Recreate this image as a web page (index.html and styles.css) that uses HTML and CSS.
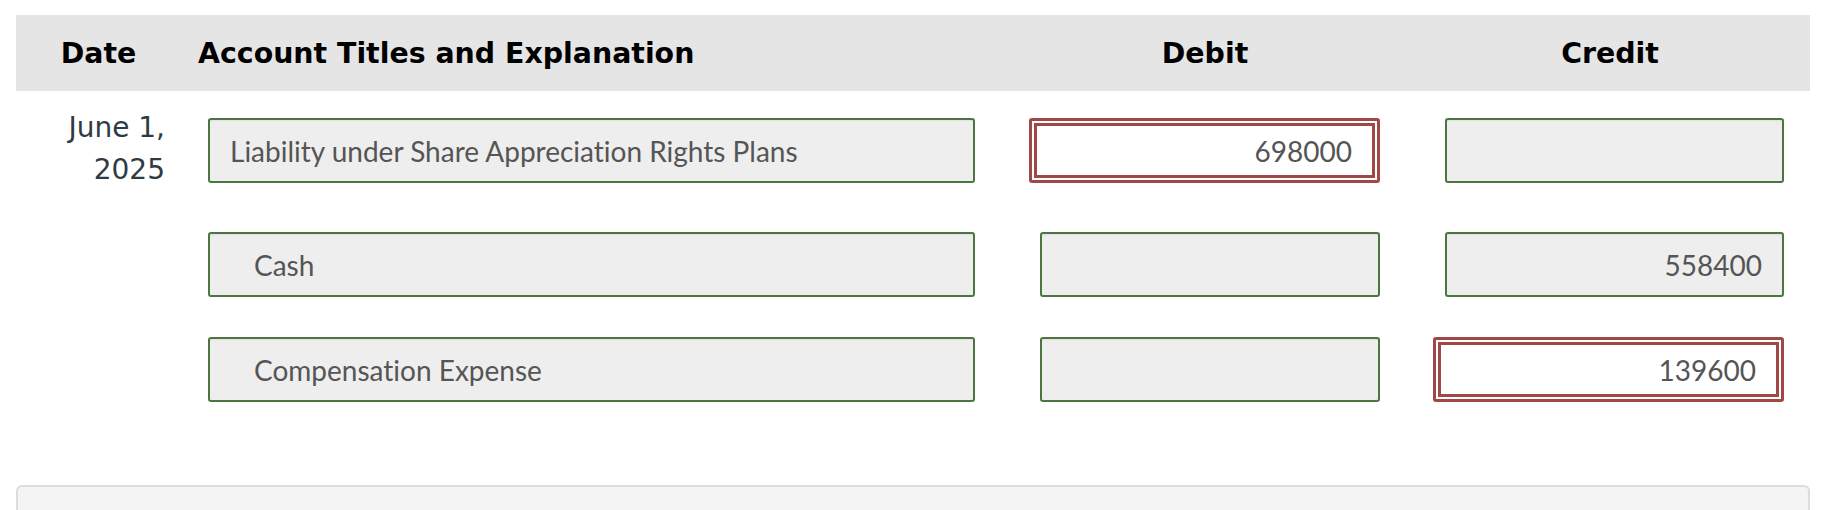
FILE: index.html
```html
<!DOCTYPE html>
<html lang="en">
<head>
<meta charset="utf-8">
<title>Journal Entry</title>
<link rel="stylesheet" href="styles.css">
</head>
<body>
<div class="page">
  <div class="journal">
    <div class="head date-h">Date</div>
    <div class="head acct-h">Account Titles and Explanation</div>
    <div class="head num-h">Debit</div>
    <div class="head num-h">Credit</div>

    <div class="cell date first">June 1,<br>2025</div>
    <div class="cell acct first"><div class="field acct-field">Liability under Share Appreciation Rights Plans</div></div>
    <div class="cell num first"><div class="field num-field wrong">698000</div></div>
    <div class="cell num credit first"><div class="field num-field"></div></div>

    <div class="cell date"></div>
    <div class="cell acct"><div class="field acct-field indent">Cash</div></div>
    <div class="cell num"><div class="field num-field"></div></div>
    <div class="cell num credit"><div class="field num-field">558400</div></div>

    <div class="cell date"></div>
    <div class="cell acct"><div class="field acct-field indent">Compensation Expense</div></div>
    <div class="cell num"><div class="field num-field"></div></div>
    <div class="cell num credit"><div class="field num-field wrong">139600</div></div>
  </div>
  <div class="panel"></div>
</div>
</body>
</html>
```

FILE: styles.css
```css
html, body {
  margin: 0;
  padding: 0;
  background: #ffffff;
}

.page {
  padding: 15px 14px 0 16px;
  height: 510px;
  box-sizing: border-box;
  overflow: hidden;
}

.journal {
  display: grid;
  grid-template-columns: 162px 822px 410px 400px;
}

.head {
  background: #e5e5e5;
  height: 76px;
  display: flex;
  align-items: center;
  font-family: "DejaVu Sans", "Liberation Sans", sans-serif;
  font-weight: bold;
  font-size: 28.4px;
  color: #000000;
}

.date-h {
  justify-content: center;
  padding-left: 3px;
}

.acct-h {
  padding-left: 20px;
}

.num-h {
  justify-content: center;
}

.cell {
  display: flex;
  align-items: flex-start;
  padding-top: 20px;
  padding-bottom: 20px;
}

.cell.first {
  padding-top: 27px;
}

.cell.date {
  font-family: "DejaVu Sans", "Liberation Sans", sans-serif;
  font-size: 28px;
  line-height: 42px;
  color: #2d3b45;
  justify-content: flex-end;
  text-align: right;
  padding-right: 13px;
}

.cell.date.first {
  padding-top: 16px;
  padding-bottom: 21px;
}

.field {
  box-sizing: border-box;
  height: 65px;
  display: flex;
  align-items: center;
  background: #eeeeee;
  border: 2px solid #4b7641;
  border-radius: 3px;
  box-shadow: inset 0 2px 2px -1px rgba(0, 0, 0, 0.06);
  font-family: Lato, "Open Sans", sans-serif;
  font-size: 28px;
  font-variant-ligatures: none;
  color: #555555;
  white-space: nowrap;
}

.cell.acct {
  padding-left: 30px;
}

.acct-field {
  width: 767px;
  padding-left: 20px;
}

.acct-field.indent {
  padding-left: 44px;
}

.cell.num {
  justify-content: flex-end;
  padding-right: 30px;
}

.cell.num.credit {
  padding-right: 26px;
}

.num-field {
  width: 340px;
  justify-content: flex-end;
  padding-right: 20px;
}

.credit .num-field {
  width: 339px;
}

.num-field.wrong,
.credit .num-field.wrong {
  width: 351px;
  background: #ffffff;
  border: 3px solid #a04846;
  box-shadow: inset 0 0 0 2px #ffffff, inset 0 0 0 5px #a04846;
  padding-right: 25px;
}

.panel {
  margin: 63px 0 0 0;
  height: 60px;
  background: #f4f4f4;
  border: 2px solid #dddddd;
  border-bottom: none;
  border-radius: 6px 6px 0 0;
}
```
